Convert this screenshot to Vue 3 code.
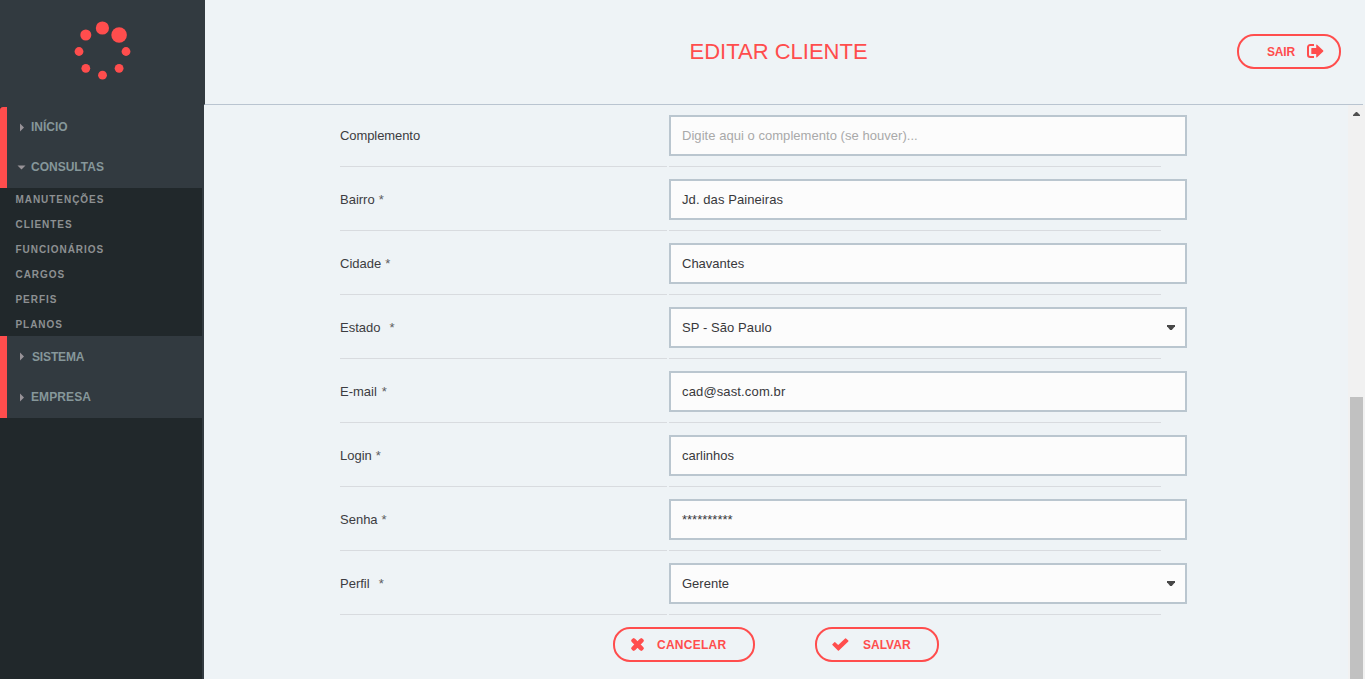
<script setup>
const sections = [
  { key: 'inicio', title: 'INÍCIO' },
  {
    key: 'consultas',
    title: 'CONSULTAS',
    open: true,
    items: ['MANUTENÇÕES', 'CLIENTES', 'FUNCIONÁRIOS', 'CARGOS', 'PERFIS', 'PLANOS'],
  },
  { key: 'sistema', title: 'SISTEMA' },
  { key: 'empresa', title: 'EMPRESA' },
]

const dots = [
  [102.4, 28, 6.6], [119.1, 35, 7.8], [126, 51.5, 4.4], [119.1, 68.3, 4.4],
  [102.5, 75.2, 4.4], [85.8, 68.3, 4.4], [79, 51.5, 4.4], [85.8, 35, 5.5],
]

const fields = [
  { key: 'complemento', label: 'Complemento', value: '', hint: 'Digite aqui o complemento (se houver)...' },
  { key: 'bairro', label: 'Bairro', required: true, value: 'Jd. das Paineiras' },
  { key: 'cidade', label: 'Cidade', required: true, value: 'Chavantes' },
  { key: 'estado', label: 'Estado', required: true, value: 'SP - São Paulo', select: true },
  { key: 'email', label: 'E-mail', required: true, value: 'cad@sast.com.br' },
  { key: 'login', label: 'Login', required: true, value: 'carlinhos' },
  { key: 'senha', label: 'Senha', required: true, value: '**********' },
  { key: 'perfil', label: 'Perfil', required: true, value: 'Gerente', select: true },
]
</script>

<template>
  <div class="page">
    <aside class="sidebar">
      <div class="brand">
        <svg width="205" height="107" viewBox="0 0 205 107">
          <circle v-for="(d, i) in dots" :key="i" :cx="d[0]" :cy="d[1]" :r="d[2]" />
        </svg>
      </div>
      <nav>
        <section v-for="s in sections" :key="s.key">
          <div class="title" :class="s.key">
            <svg v-if="s.open" class="caret" width="9" height="9" viewBox="0 0 9 9"><path d="M.5 2.5H8.5L4.5 6.5Z" /></svg>
            <svg v-else class="caret" width="9" height="9" viewBox="0 0 9 9"><path d="M3 .5V8.5L7 4.5Z" /></svg>
            <span>{{ s.title }}</span>
          </div>
          <ul v-if="s.items">
            <li v-for="item in s.items" :key="item">{{ item }}</li>
          </ul>
        </section>
      </nav>
    </aside>

    <main>
      <header>
        <h1>EDITAR CLIENTE</h1>
        <button class="btn exit">
          <span>SAIR</span>
          <svg width="17" height="14" viewBox="0 0 17 14">
            <path d="M7 1H3.2A2.2 2.2 0 0 0 1 3.2V10.8A2.2 2.2 0 0 0 3.2 13H7" fill="none" stroke="#ff4d4d" stroke-width="2" />
            <path d="M4.3 4.6Q4.3 4 4.9 4H9.2V1.2Q9.3 .2 10.1 .8L16.2 6.5Q16.6 7 16.2 7.5L10.1 13.2Q9.3 13.8 9.2 12.8V10H4.9Q4.3 10 4.3 9.4Z" />
          </svg>
        </button>
      </header>

      <div class="body">
        <form>
          <div v-for="f in fields" :key="f.key" class="row">
            <label :class="f.key"><span>{{ f.label }}</span><i v-if="f.required">*</i></label>
            <div class="cell">
              <div class="box" :class="f.key">
                <span v-if="f.value">{{ f.value }}</span>
                <span v-else class="hint">{{ f.hint }}</span>
                <svg v-if="f.select" width="8" height="5" viewBox="0 0 8 5"><path d="M0 0H8V1.2L4.8 5H3.2L0 1.2Z" /></svg>
              </div>
            </div>
          </div>
          <div class="actions">
            <button type="button" class="btn cancel">
              <svg width="13" height="13" viewBox="0 0 13 13">
                <path d="M2.7 2.7L10.3 10.3M10.3 2.7L2.7 10.3" stroke="#ff4d4d" stroke-width="3.4" stroke-linecap="square" />
                <path d="M2.7 2.7L10.3 10.3M10.3 2.7L2.7 10.3" stroke="#ff4d4d" stroke-width="4.6" stroke-linecap="round" />
              </svg>
              <span>CANCELAR</span>
            </button>
            <button type="button" class="btn save">
              <svg width="17" height="13" viewBox="0 0 17 13">
                <path d="M.4 7.1Q0 6.7 .4 6.2L2.4 4.2Q2.8 3.8 3.2 4.2L6.2 7L13.1 .4Q13.6 0 14 .4L16.3 2.5Q16.7 3 16.3 3.4L6.9 12.5Q6.4 12.9 5.9 12.5Z" />
              </svg>
              <span>SALVAR</span>
            </button>
          </div>
        </form>
        <div class="scroll">
          <svg width="7" height="4" viewBox="0 0 7 4"><path d="M3 0H4L7 3V4H0V3Z" /></svg>
          <div class="thumb"></div>
        </div>
      </div>
    </main>
  </div>
</template>

<style>
html, body { margin: 0; overflow: hidden; background: #eef2f6; }
</style>

<style scoped>
.page {
  display: flex;
  width: 1365px;
  height: 679px;
  overflow: hidden;
  background: #eef3f6;
  font-family: "Liberation Sans", Arial, sans-serif;
  font-size: 13px;
  color: #3c3c41;
}
.page * { box-sizing: border-box; }
.sidebar {
  width: 204px;
  flex: none;
  background: linear-gradient(to right, #21282b 202px, #323a40 202px);
}
.brand { width: 204px; height: 107px; background: #323a40; }
.brand svg { display: block; fill: #ff4d4d; }
.title {
  display: flex;
  align-items: center;
  height: 40px;
  padding-left: 10px;
  border-left: 7px solid #ff4d4d;
  background: #323a40;
  color: #86979a;
  font-size: 12px;
  font-weight: bold;
}
.title.inicio { border-top-left-radius: 3px; }
.title.consultas { height: 41px; padding-bottom: 1px; letter-spacing: 0; }
.title.sistema { height: 41px; letter-spacing: -0.15px; }
.title.sistema span { margin-left: 1px; }
.title.empresa { height: 41px; padding-bottom: 1px; letter-spacing: 0.1px; }
.caret { margin-right: 5px; fill: #989398; }
ul { margin: 0; padding: 0 0 0 15.5px; height: 148px; list-style: none; }
li {
  height: 25px;
  line-height: 23px;
  color: #8d9092;
  font-size: 10px;
  font-weight: bold;
  letter-spacing: 0.95px;
}
main { flex: 1; display: flex; flex-direction: column; }
header {
  display: flex;
  align-items: center;
  justify-content: flex-end;
  height: 105px;
  margin-right: 2px;
  padding: 0 22px 2px 0;
  border-bottom: 1px solid #b9c4d0;
  border-left: 1px solid #323a40;
}
h1 {
  flex: 1;
  margin: 0;
  padding: 1px 0 0 484.5px;
  font-size: 22px;
  font-weight: normal;
  line-height: 26px;
  color: #ff4d4d;
}
.btn {
  display: flex;
  align-items: center;
  height: 35px;
  padding: 0;
  border: 2px solid #ff4d4d;
  border-radius: 17px;
  background: transparent;
  color: #ff4d4d;
  font: bold 12px "Liberation Sans", Arial, sans-serif;
  letter-spacing: 0.25px;
}
.btn svg { fill: #ff4d4d; flex: none; }
.exit { width: 104px; padding-left: 28px; letter-spacing: -0.2px; }
.exit span { padding-top: 1px; }
.exit svg { margin-left: 12px; }
.cancel { width: 142px; padding-left: 16px; }
.cancel span { margin-left: 13px; }
.save { width: 124px; padding-left: 15px; letter-spacing: 0; }
.save span { margin-left: 14px; }
.body { flex: 1; display: flex; justify-content: space-between; overflow: hidden; }
form { width: 821px; margin: -2px 0 0 136px; }
.row { display: grid; grid-template-columns: 327px 492px; column-gap: 2px; height: 64px; }
label, .cell { border-bottom: 1px solid #d8dbdf; }
label { display: flex; padding-top: 12px; line-height: 41px; }
label i { margin-left: 4px; font-style: normal; color: #5d5d61; }
label.complemento { letter-spacing: -0.08px; }
.email i { margin-left: 5px; }
.estado i, .perfil i { margin-left: 9px; }
.cell { padding-top: 12px; }
.box {
  display: flex;
  align-items: center;
  justify-content: space-between;
  width: 518px;
  height: 41px;
  padding: 0 11px;
  border: 2px solid #bac6cf;
  background: #fcfcfc;
  color: #38383b;
  white-space: nowrap;
}
.box.complemento { letter-spacing: 0.04px; }
.box.bairro, .box.estado { letter-spacing: 0.08px; }
.box.email { letter-spacing: 0.14px; }
.box svg { fill: #484848; margin-right: -1px; }
.hint { color: #a9a9a9; }
.actions { display: flex; gap: 60px; padding: 12px 0 0 273px; }
.scroll {
  display: flex;
  flex-direction: column;
  align-items: center;
  width: 17px;
  padding-top: 7px;
  background: #f1f1f1;
}
.scroll svg { fill: #505050; flex: none; }
.thumb { width: 13px; flex: 1; margin-top: 281px; background: #c1c1c1; }
</style>
